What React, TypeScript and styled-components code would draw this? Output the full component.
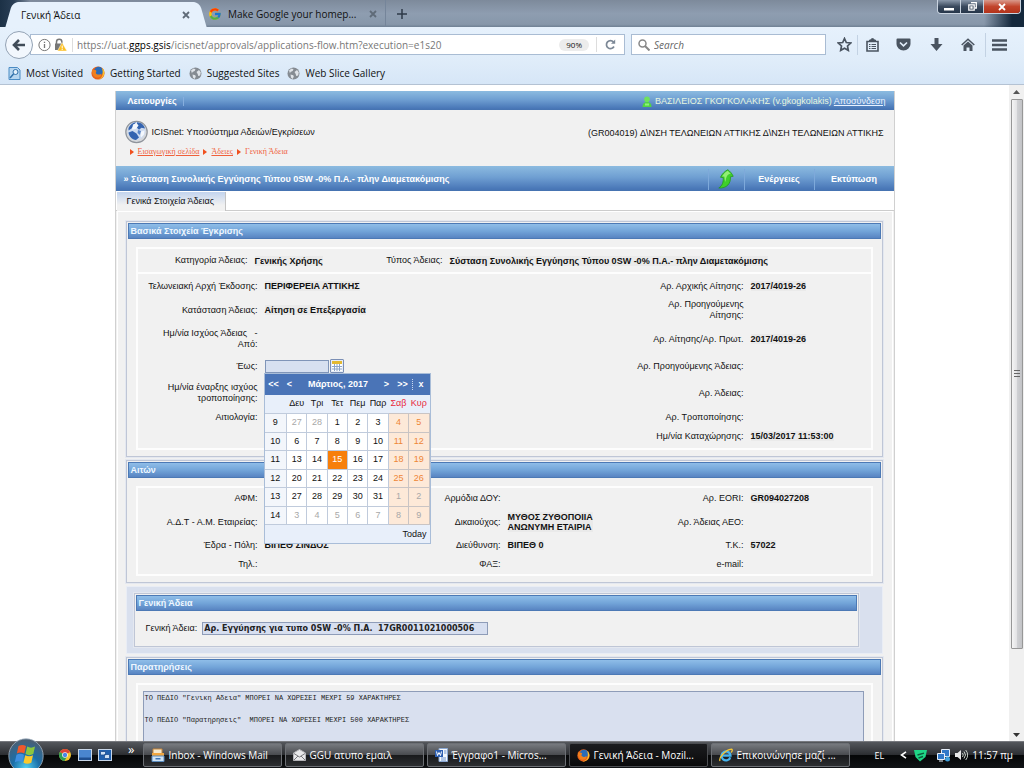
import React from 'react';
import styled, { createGlobalStyle, css } from 'styled-components';
import { FcGoogle } from 'react-icons/fc';

const Global = createGlobalStyle`
  * { box-sizing: border-box; }
  html, body, #root { height: 100%; }
  body { margin: 0; background: #fff; overflow: hidden; }
  button, input, textarea { font: inherit; color: inherit; margin: 0; padding: 0; }
  button { background: none; border: 0; cursor: pointer; }
  svg { display: block; flex: none; }
`;

const uiFont = '"Open Sans", "Noto Sans", sans-serif';
const pageFont = '"Liberation Sans", Arial, sans-serif';

/* ---------- window ---------- */

const Screen = styled.div`
  display: flex;
  flex-direction: column;
  height: 100vh;
  overflow: hidden;
  font-family: ${uiFont};
  font-size: 10px;
  color: #111;
`;

const TabStrip = styled.div`
  display: flex;
  align-items: stretch;
  height: 27px;
  flex: none;
  padding-left: 14px;
  background: linear-gradient(90deg, #1c3146 0, #2a3f56 14px, transparent 30px, transparent calc(100% - 40px), #14283c calc(100% - 12px)),
    linear-gradient(#7d8a9b, #8e9db0 50%, #8797aa 90%, #6f8094);
`;

const Tab = styled.div<{ $active?: boolean }>`
  position: relative;
  display: flex;
  align-items: center;
  ${(p) =>
    p.$active &&
    css`
      width: 184px;
      padding: 0 8px 0 7px;
      margin-top: 2px;
      background: #e6f1fc;
      border-radius: 6px 6px 0 0;
      z-index: 1;
      &::before,
      &::after {
        content: '';
        position: absolute;
        z-index: -1;
        top: 0;
        bottom: 0;
        width: 14px;
        background: #e6f1fc;
      }
      &::before {
        left: -5px;
        border-radius: 6px 0 0 0;
        transform: skewX(-16deg);
      }
      &::after {
        right: -5px;
        border-radius: 0 6px 0 0;
        transform: skewX(16deg);
      }
    `}
  ${(p) =>
    !p.$active &&
    css`
      gap: 6px;
      width: 188px;
      padding: 1px 8px 0 10px;
      border-right: 1px solid #75859a;
    `}
`;

const TabTitle = styled.span`
  flex: 1;
  white-space: nowrap;
`;

const IconButton = styled.button`
  display: grid;
  place-items: center;
  flex: none;
`;

const NewTab = styled(IconButton)`
  width: 32px;
`;

const WindowControls = styled.div`
  display: flex;
  margin-left: auto;
  margin-right: 3px;
  height: 14px;
  border: 1px solid #c9d3df;
  border-top: 0;
  border-radius: 0 0 4px 4px;
  overflow: hidden;
`;

const WindowButton = styled(IconButton)<{ $close?: boolean }>`
  width: ${(p) => (p.$close ? 36 : 23)}px;
  border-right: ${(p) => (p.$close ? 0 : 1)}px solid #c9d3df;
  background: ${(p) =>
    p.$close ? 'linear-gradient(#d99a8c, #c2452c 50%, #b3331b)' : 'linear-gradient(#8b99ab, #3b4a5e 50%, #26364a)'};
`;

const NavBar = styled.div`
  display: flex;
  align-items: center;
  height: 35px;
  flex: none;
  padding: 0 11px 0 5px;
  background: linear-gradient(#e6f1fc, #dfecf9);
`;

const BackButton = styled(IconButton)`
  width: 28px;
  height: 28px;
  border: 1px solid #93a2b4;
  border-radius: 50%;
  background: #f2f7fd;
  z-index: 1;
`;

const UrlBar = styled.div`
  display: flex;
  align-items: center;
  flex: 1;
  height: 21px;
  margin-left: -3px;
  padding-left: 7px;
  background: #fff;
  border: 1px solid #a9bcd3;
`;

const UrlText = styled.span`
  flex: 1;
  margin-left: 5px;
  padding-left: 4px;
  border-left: 1px solid #ddd;
  white-space: nowrap;
  overflow: hidden;
  color: #777;
  b {
    font-weight: 400;
    color: #000;
  }
`;

const ZoomPill = styled.button`
  height: 12px;
  padding: 0 7px;
  border-radius: 6px;
  background: #ececec;
  font-size: 8px;
  line-height: 12px;
`;

const Reload = styled(IconButton)`
  width: 28px;
  height: 15px;
  margin-left: 7px;
  border-left: 1px solid #ddd;
`;

const SearchBox = styled.label`
  display: flex;
  align-items: center;
  gap: 4px;
  width: 195px;
  height: 21px;
  margin-left: 6px;
  padding-left: 6px;
  background: #fff;
  border: 1px solid #a9bcd3;
  input {
    width: 150px;
    border: 0;
    outline: 0;
    font-style: italic;
    background: none;
  }
  input::placeholder {
    color: #666;
    opacity: 1;
  }
`;

const Tools = styled.div`
  display: flex;
  align-items: center;
  margin-left: 10px;
  color: #4a5460;
`;

const Tool = styled(IconButton)<{ $w: number; $sep?: boolean }>`
  width: ${(p) => p.$w}px;
  height: 24px;
  border-left: ${(p) => (p.$sep ? '1px solid #c3d2e3' : '0')};
`;

const Bookmarks = styled.div`
  display: flex;
  align-items: center;
  gap: 8px;
  height: 23px;
  flex: none;
  padding-left: 8px;
  background: linear-gradient(#dfecf9, #d6e6f7);
  border-bottom: 1px solid #b4c2d3;
`;

const Bookmark = styled.a`
  display: flex;
  align-items: center;
  gap: 5px;
  color: #111;
  text-decoration: none;
`;

/* ---------- web page ---------- */

const Viewport = styled.div`
  display: flex;
  flex: 1;
  min-height: 0;
  background: #fff;
`;

const Canvas = styled.div`
  flex: 1;
  min-width: 0;
  overflow: hidden;
  padding: 6px 16px 0;
  font-family: ${pageFont};
  font-size: 9px;
  line-height: 11px;
`;

const Page = styled.div`
  max-width: 780px;
  min-height: 800px;
  margin: 0 auto;
  border: solid #d0d0d0;
  border-width: 0 1px;
  background: #f1f1f1;
`;

const barFill = 'linear-gradient(#8cbbe0, #6f9fd2 45%, #4a78b8 90%, #4572b0)';

const TopBar = styled.header`
  display: flex;
  align-items: center;
  justify-content: space-between;
  height: 19px;
  padding: 1px 8px 0 12px;
  background: ${barFill};
  color: #e6f6e0;
  a {
    color: #e8f1ff;
  }
`;

const MenuTitle = styled.button`
  padding-right: 6px;
  border-right: 1px solid #86aede;
  height: 9px;
  line-height: 9px;
  font-weight: 700;
  color: #fff;
`;

const UserInfo = styled.div`
  display: flex;
  align-items: center;
  gap: 3px;
`;

const Masthead = styled.div`
  display: flex;
  justify-content: space-between;
  height: 56px;
  padding: 9px 10px 0 9px;
`;

const Brand = styled.div`
  display: flex;
  align-items: center;
  gap: 4px;
  height: 26px;
`;

const Office = styled.div`
  line-height: 28px;
`;

const Crumbs = styled.nav`
  display: flex;
  align-items: center;
  gap: 4px;
  padding-left: 5px;
  margin-top: 1px;
  font-family: 'Liberation Serif', serif;
  font-size: 8px;
  color: #f0603a;
  a {
    color: #f0603a;
  }
`;

const TitleBar = styled.div`
  display: flex;
  align-items: center;
  height: 25px;
  padding: 1px 0 0 8px;
  background: ${barFill};
  color: #fff;
  font-weight: 700;
`;

const TitleText = styled.h1`
  flex: 1;
  margin: 0;
  font-size: 9px;
`;

const TitleAction = styled.button<{ $w: number }>`
  display: grid;
  place-items: center;
  width: ${(p) => p.$w}px;
  height: 21px;
  border-left: 1px solid #7ea9da;
`;

const PageTabs = styled.div`
  display: flex;
  height: 20px;
  padding: 1px 1px 0;
  background: #fff;
  border-bottom: 1px solid #ccc;
`;

const PageTab = styled.button`
  height: 19px;
  padding: 0 11px 0 10px;
  border-right: 1px solid #c4c4c4;
  background: linear-gradient(#c3d4ee, #f1f1f1 70%);
`;

const Content = styled.main`
  margin: 0 1px;
  padding: 9px 9px 0 8px;
  border: solid #fff;
  border-width: 1px 1px 0;
`;

const Panel = styled.section`
  margin-bottom: 3px;
  padding: 1px 1px 6px;
  border: 1px solid #bfc6d6;
  background: #f1f1f1;
  box-shadow: 0 0 0 1px #e4e8f0;
`;

const TintedPanel = styled.section`
  margin-bottom: 3px;
  padding: 6px 23px 6px 7px;
  background: #d9e0ee;
  border: 1px solid #e9edf5;
  ${Panel} {
    margin: 0;
  }
`;

const PanelTitle = styled.h2`
  margin: 0;
  height: 16px;
  padding-left: 2px;
  border: 1px solid #4c79b5;
  background: linear-gradient(#8fbde8, #73a5d9 50%, #5884c2);
  color: #eef7ff;
  font-size: 9px;
  line-height: 15px;
`;

const Group = styled.div`
  margin: 8px 8px 0;
  border: 2px solid #fdfdfd;
`;

const row = css`
  display: grid;
  align-items: center;
`;

const KindRow = styled.div`
  ${row}
  grid-template-columns: 110px 7px 108px 80px 7px 1fr;
  height: 25px;
  border-bottom: 2px solid #fdfdfd;
`;

const BasicRow = styled.div<{ $h: number }>`
  ${row}
  grid-template-columns: 120px 7px 1fr 112px 7px 120px;
  height: ${(p) => p.$h}px;
`;

const PartyRow = styled.div<{ $h: number }>`
  ${row}
  grid-template-columns: 120px 7px 1fr 80px 7px 156px 80px 7px 120px;
  height: ${(p) => p.$h}px;
`;

const Label = styled.label`
  text-align: right;
  white-space: pre;
`;

const Value = styled.b`
  justify-self: start;
  background: #eaeaea;
  line-height: 10px;
  white-space: pre;
`;

const Gap = styled.span``;

const DateField = styled.div`
  position: relative;
  display: flex;
  align-items: center;
  gap: 1px;
  width: 80px;
  input {
    width: 64px;
    height: 13px;
    border: 1px solid #8095b8;
    background: #d7e0f0;
  }
`;

const DateButton = styled(IconButton)`
  width: 14px;
  height: 14px;
  border: 1px solid #7b8fb5;
  border-radius: 1px;
  background: #e6ecf6;
`;

const Calendar = styled.div`
  position: absolute;
  z-index: 2;
  top: 14px;
  left: -1px;
  width: 167px;
  border: 1px solid #a9bdd8;
  background: #e8effa;
`;

const CalendarHead = styled.div`
  display: grid;
  grid-template-columns: 18px 14px 1fr 14px 18px 18px;
  align-items: center;
  height: 21px;
  background: #4a74b7;
  color: #fff;
  text-align: center;
  font-weight: 700;
  button:last-child {
    border-left: 1px dotted #c9d8ef;
  }
`;

const Days = styled.table`
  width: 100%;
  table-layout: fixed;
  border-collapse: collapse;
  text-align: center;
  th,
  td {
    padding: 0;
  }
  thead th {
    height: 18px;
    font-weight: 400;
  }
  th:first-child {
    width: 22px;
  }
  tbody tr {
    height: 18px;
  }
  tbody tr:nth-child(odd) {
    height: 19px;
  }
  tbody th {
    background: #f3f6fb;
    font-weight: 400;
    border: 1px solid #c0cbdc;
    border-left: 0;
  }
`;

const Weekday = styled.th<{ $weekend: boolean }>`
  color: ${(p) => (p.$weekend ? '#e8283c' : '#111')};
`;

const Day = styled.td<{ $weekend: boolean; $other: boolean; $today: boolean }>`
  border: 1px solid ${(p) => (p.$weekend ? '#c9c4c4' : '#c0cbdc')};
  background: ${(p) => (p.$today ? '#f77f0a' : p.$weekend ? '#fde9d8' : '#fff')};
  color: ${(p) => (p.$today ? '#fff' : p.$other ? '#a8a8a8' : p.$weekend ? '#ee8636' : '#111')};
`;

const CalendarFoot = styled.div`
  height: 18px;
  padding-right: 3px;
  text-align: right;
  line-height: 18px;
`;

const PermitRow = styled.div`
  display: flex;
  align-items: center;
  gap: 5px;
  height: 23px;
  margin: 6px 0 0 10px;
  input {
    width: 286px;
    height: 13px;
    padding: 0 1px;
    border: 1px solid #8e9cb8;
    background: #d7dff0;
    color: #222;
    font: 700 8px 'DejaVu Sans', sans-serif;
  }
`;

const Notes = styled.textarea`
  display: block;
  width: calc(100% - 12px);
  height: 120px;
  margin: 6px 0 0 5px;
  padding: 1px;
  resize: none;
  overflow: hidden;
  border: 1px solid #8e9cb8;
  background: #d9e0ef;
  color: #222;
  font: 7px/11px 'Liberation Mono', monospace;
`;

const ScrollTrack = styled.div`
  display: flex;
  flex-direction: column;
  align-items: center;
  width: 15px;
  flex: none;
  padding: 5px 0 4px;
  background: #f0f0f0;
`;

const ScrollThumb = styled.div`
  display: grid;
  place-items: center;
  width: 12px;
  height: 85%;
  margin: 5px 0 auto;
  border: 1px solid #979797;
  border-radius: 1px;
  background: linear-gradient(90deg, #f5f5f5, #e4e4e6 45%, #cfd0d3 55%, #c2c3c6);
`;

/* ---------- task bar ---------- */

const TaskBar = styled.footer`
  display: flex;
  align-items: center;
  height: 27px;
  flex: none;
  padding: 0 11px 0 8px;
  border-top: 1px solid #77797e;
  background: linear-gradient(#54575c, #2d2f33 48%, #050607 52%, #111316);
  color: #fff;
`;

const Orb = styled(IconButton)`
  width: 36px;
  height: 27px;
  align-items: end;
  z-index: 1;
  svg {
    margin-top: -4px;
  }
`;

const QuickLaunch = styled.div`
  display: flex;
  align-items: center;
  gap: 6px;
  margin-left: 14px;
`;

const More = styled.button`
  align-self: flex-start;
  margin: 0 9px 0 16px;
  font-size: 13px;
  line-height: 14px;
`;

const Tasks = styled.div`
  display: flex;
  gap: 3px;
  flex: 1;
`;

const Task = styled.button<{ $active?: boolean }>`
  display: flex;
  align-items: center;
  gap: 3px;
  flex: 0 1 139px;
  min-width: 0;
  height: 24px;
  padding-left: 7px;
  border: 1px solid ${(p) => (p.$active ? '#4c4e52' : '#6d7075')};
  border-radius: 2px;
  background: ${(p) =>
    p.$active ? 'linear-gradient(#1b1c1f, #0a0a0b)' : 'linear-gradient(#777a7f, #4a4c50 48%, #191a1c 52%, #2c2e31)'};
  white-space: nowrap;
  overflow: hidden;
`;

const Tray = styled.div`
  display: flex;
  align-items: center;
  gap: 4px;
`;

const Language = styled.span`
  margin-right: 12px;
  font-size: 9px;
`;

/* ---------- icons ---------- */

const Cross = ({ color = '#5f6b78' }: { color?: string }) => (
  <svg width="8" height="8" viewBox="0 0 8 8">
    <path d="M1 1l6 6M7 1L1 7" stroke={color} strokeWidth="1.8" />
  </svg>
);

const FirefoxIcon = ({ size = 14 }: { size?: number }) => (
  <svg width={size} height={size} viewBox="0 0 14 14">
    <circle cx="7" cy="7" r="6.6" fill="#e8611a" />
    <circle cx="7.6" cy="5.2" r="4.4" fill="#2b6cb8" />
    <path d="M1 3.2C2 4 3 3.800 4.200 4c1 .2 1.600 1 1 1.700C4.400 6.500 4.800 8 6.500 8.400c1.700.4 3 .2 3.600-1 .6 2.800-1.400 4.200-3.600 4.200C3.500 11.600.5 9 1 3.200z" fill="#f0801e" />
    <path d="M11 1.800c2.400 2 3 5.500 1.600 8-1.400 2.600-4.200 3.900-6.800 3.600 3.600-.3 5.600-2.600 5.900-5.200.2-2.400-.2-4.400-.7-6.400z" fill="#fbc52d" />
  </svg>
);

const GreyGlobe = () => (
  <svg width="13" height="13" viewBox="0 0 13 13">
    <circle cx="6.500" cy="6.500" r="6" fill="#858b92" />
    <path d="M2 3.500l2.500-2 2 .8-.8 1.800-2.200.8L3 6.500zM7.500 5l2.500-2 1.800 2.200-.6 3.300-2 .5-.5-2zM3.500 7.500l2.800.7.500 1.500L5.500 12 4 10.500z" fill="#dfe3e8" />
  </svg>
);

const BlueGlobe = () => (
  <svg width="23" height="24" viewBox="0 0 23 24">
    <circle cx="11.500" cy="12" r="10.700" fill="#d5d8dc" stroke="#8f949b" strokeWidth="1.200" />
    <circle cx="11.500" cy="11" r="9" fill="#cfdcf0" />
    <path d="M3.500 8C5 4.500 8 2.500 11 2.200L8.500 6 6.500 8.500l-3 2zM12 2.200c4 0 7 2.800 8 6.300l-3.500-.8-2.500 2-2.500-2.500zM3.500 12.500l4-1.500 4 2.500 2.500 4L11 20c-4-.5-7-3.500-7.500-7.500z" fill="#3464b0" />
    <path d="M8 4.500l3.500-1.500 2 2.500L11 9l-4 .5zM15 12l4.500-1.500-.5 4-3 3z" fill="#f4f8fd" />
    <path d="M13 10l3 1-1 4-2.500-2z" fill="#5a86c8" />
  </svg>
);

const Bullet = () => (
  <svg width="4" height="6" viewBox="0 0 4 6">
    <path d="M0 0l4 3-4 3z" fill="#f0501e" />
  </svg>
);

const GreenArrow = () => (
  <svg width="16" height="20" viewBox="0 0 16 20">
    <path d="M.8 19C4.500 16.500 5.500 13 5.200 8.500L2.500 8.300C4 5 6.500 2.500 9.800.7c2.200 1.600 4.400 4 5.400 6.600l-2.800.5c.6 6.500-3.400 11.700-11.600 11.200z" fill="#3fd02b" stroke="#259a1c" strokeWidth=".8" />
    <path d="M4 7.500C5.500 5 7.500 3 9.700 1.800l3 3C9 5 8 8.500 7.500 13 6.500 11 6.800 9 6.300 7.600z" fill="#93ee74" />
  </svg>
);

const UserIcon = () => (
  <svg width="10" height="11" viewBox="0 0 10 11">
    <circle cx="5" cy="3.200" r="2.800" fill="#6fe25c" />
    <path d="M.5 11c0-3.500 1.500-5 4.500-5s4.500 1.500 4.500 5z" fill="#53d543" />
    <path d="M3 7.500h4v2H3z" fill="#8ef07c" />
  </svg>
);

const WindowsFlag = () => (
  <svg width="36" height="31" viewBox="0 0 36 31">
    <defs>
      <radialGradient id="orb" cx=".5" cy=".85" r=".8">
        <stop offset="0" stopColor="#52d0f2" />
        <stop offset=".5" stopColor="#1b6ea8" />
        <stop offset="1" stopColor="#4a5f74" />
      </radialGradient>
    </defs>
    <circle cx="18" cy="18" r="17.200" fill="url(#orb)" stroke="#a5b4c1" strokeWidth=".8" />
    <path d="M10.500 8c2.700-1.400 5-1.400 7.500 0l-1.700 7.500c-2.600-1.300-4.800-1.300-7.500 0z" fill="#f0592b" />
    <path d="M19.200 8.600c2.600 1.400 5 1.400 7.800 0l-1.700 7.500c-2.800 1.400-5.200 1.400-7.800 0z" fill="#8cc63f" />
    <path d="M8.500 16.700c2.700-1.300 5-1.300 7.500 0l-1.700 7.500c-2.600-1.300-4.800-1.300-7.500 0z" fill="#3f8fe0" />
    <path d="M17.200 17.300c2.600 1.400 5 1.400 7.800 0l-1.700 7.500c-2.800 1.400-5.200 1.400-7.800 0z" fill="#fcc92c" />
  </svg>
);

const ChromeIcon = () => (
  <svg width="14" height="14" viewBox="0 0 14 14">
    <circle cx="7" cy="7" r="6" fill="#f2c22e" />
    <path d="M7 7L1.800 4A6 6 0 0 1 12.200 4z" fill="#dc4437" />
    <path d="M7 7L1.800 4A6 6 0 0 0 6.500 13L9 8.500z" fill="#2f9e54" />
    <circle cx="7" cy="7" r="2.800" fill="#fff" />
    <circle cx="7" cy="7" r="2.200" fill="#4a86e8" />
  </svg>
);

const DesktopIcon = ({ windows }: { windows?: boolean }) => (
  <svg width="14" height="12" viewBox="0 0 14 12">
    <rect x=".5" y=".5" width="13" height="11" fill={windows ? '#1f5fae' : '#4a86cf'} stroke="#c8d6e8" />
    {windows ? (
      <path d="M2.500 2.500h5v3.500h-5zM6.500 5.500h5v4h-5z" fill="#cfe0f4" stroke="#1b4d90" strokeWidth=".8" />
    ) : (
      <path d="M1 8.500h12V11H1z" fill="#1f4f90" />
    )}
  </svg>
);

const MailStack = () => (
  <svg width="14" height="14" viewBox="0 0 14 14">
    <path d="M2 1h9v9H2z" fill="#f4e9cf" stroke="#c9873b" />
    <path d="M1 5h12v3H1z" fill="#f0a640" />
    <path d="M1 8h12v5.500H1z" fill="#cfe3f5" stroke="#5a8cc0" />
    <path d="M4.500 10h5v1.500h-5z" fill="#3c74b4" />
  </svg>
);

const Envelope = () => (
  <svg width="13" height="12" viewBox="0 0 13 12">
    <path d="M.5 4L6.500.5l6 3.500v7.500H.5z" fill="#e8e8ea" stroke="#b4b4b8" />
    <path d="M1 4.500l5.500 3.500L12 4.500M1 11l4-4M12 11L8 7" fill="none" stroke="#77777c" />
  </svg>
);

const WordIcon = () => (
  <svg width="13" height="14" viewBox="0 0 13 14">
    <path d="M4 .5h8.500v13H4z" fill="#f4f8fd" stroke="#8aa8d4" />
    <path d="M6 10h5M6 12h5M9 3h2.500M9 5h2.500" stroke="#6d92cc" />
    <path d="M0 2h8v7H0z" fill="#2d5fb2" />
    <path d="M1.500 3.500l1 4L4 4.500l1.500 3 1-4" fill="none" stroke="#fff" />
  </svg>
);

const IeIcon = () => (
  <svg width="14" height="14" viewBox="0 0 14 14">
    <path d="M11.300 9.300A4.500 4.500 0 1 1 11.500 7.600H3.500" fill="none" stroke="#45b4ee" strokeWidth="2.300" />
    <path d="M1 13C-.5 10 6 2 12.500 1.200c1.500.3.500 2.300-.3 3.300" fill="none" stroke="#f4c736" strokeWidth="1.300" />
  </svg>
);

/* ---------- data ---------- */

const weekdays = ['Δευ', 'Τρι', 'Τετ', 'Πεμ', 'Παρ', 'Σαβ', 'Κυρ'];
const weeks: { n: number; days: number[] }[] = [
  { n: 9, days: [27, 28, 1, 2, 3, 4, 5] },
  { n: 10, days: [6, 7, 8, 9, 10, 11, 12] },
  { n: 11, days: [13, 14, 15, 16, 17, 18, 19] },
  { n: 12, days: [20, 21, 22, 23, 24, 25, 26] },
  { n: 13, days: [27, 28, 29, 30, 31, 1, 2] },
  { n: 14, days: [3, 4, 5, 6, 7, 8, 9] },
];

const isOtherMonth = (week: number, day: number) => (week === 9 && day > 20) || (week > 12 && day < 10);

const DatePicker = () => (
  <Calendar>
    <CalendarHead>
      <button>&lt;&lt;</button>
      <button>&lt;</button>
      <span>Μάρτιος, 2017</span>
      <button>&gt;</button>
      <button>&gt;&gt;</button>
      <button>x</button>
    </CalendarHead>
    <Days>
      <thead>
        <tr>
          <th />
          {weekdays.map((d, i) => (
            <Weekday key={d} $weekend={i > 4}>
              {d}
            </Weekday>
          ))}
        </tr>
      </thead>
      <tbody>
        {weeks.map((w) => (
          <tr key={w.n}>
            <th>{w.n}</th>
            {w.days.map((d, i) => (
              <Day key={i} $weekend={i > 4} $other={isOtherMonth(w.n, d)} $today={w.n === 11 && d === 15}>
                {d}
              </Day>
            ))}
          </tr>
        ))}
      </tbody>
    </Days>
    <CalendarFoot>Today</CalendarFoot>
  </Calendar>
);

const Field = ({ label, value }: { label?: string; value?: string }) => (
  <>
    <Label as="span">{label}</Label>
    <Gap />
    {value ? <Value>{value}</Value> : <Gap />}
  </>
);

const permitType = 'Σύσταση Συνολικής Εγγύησης Τύπου 0SW -0% Π.Α.- πλην Διαμετακόμισης';
const notes =
  'ΤΟ ΠΕΔΙΟ "Γενικη Αδεια" ΜΠΟΡΕΙ ΝΑ ΧΩΡΕΣΕΙ ΜΕΧΡΙ 59 ΧΑΡΑΚΤΗΡΕΣ\n\nΤΟ ΠΕΔΙΟ "Παρατηρησεις"  ΜΠΟΡΕΙ ΝΑ ΧΩΡΕΣΕΙ ΜΕΧΡΙ 500 ΧΑΡΑΚΤΗΡΕΣ';

const Browser = () => (
  <>
    <TabStrip>
      <Tab $active>
        <TabTitle>Γενική Άδεια</TabTitle>
        <IconButton aria-label="Close tab">
          <Cross />
        </IconButton>
      </Tab>
      <Tab>
        <FcGoogle size={14} />
        <TabTitle>Make Google your homep...</TabTitle>
        <IconButton aria-label="Close tab">
          <Cross />
        </IconButton>
      </Tab>
      <NewTab aria-label="New tab">
        <svg width="10" height="10" viewBox="0 0 10 10">
          <path d="M5 0v10M0 5h10" stroke="#2e3a48" strokeWidth="1.500" />
        </svg>
      </NewTab>
      <WindowControls>
        <WindowButton aria-label="Minimize">
          <svg width="10" height="8" viewBox="0 0 10 8">
            <path d="M0 5h10v2.500H0z" fill="#fff" />
          </svg>
        </WindowButton>
        <WindowButton aria-label="Restore">
          <svg width="9" height="9" viewBox="0 0 9 9">
            <path d="M3 .700h5.300v5.300H7M.800 2.800h5.400v5.400H.800zM3 5h1v1H3z" fill="none" stroke="#fff" strokeWidth="1.300" />
          </svg>
        </WindowButton>
        <WindowButton $close aria-label="Close">
          <Cross color="#fff" />
        </WindowButton>
      </WindowControls>
    </TabStrip>
    <NavBar>
      <BackButton aria-label="Back">
        <svg width="14" height="12" viewBox="0 0 14 12">
          <path d="M13 6H3M7 1L2 6l5 5" fill="none" stroke="#414c58" strokeWidth="2.600" />
        </svg>
      </BackButton>
      <UrlBar>
        <svg width="29" height="14" viewBox="0 0 29 14">
          <circle cx="6.500" cy="7" r="5.600" fill="none" stroke="#777" />
          <path d="M6.500 6v4M6.500 3.800v1.300" stroke="#777" strokeWidth="1.300" />
          <path d="M18.500 6V4a2.700 2.700 0 0 1 5.400 0v2" fill="none" stroke="#777" strokeWidth="1.500" />
          <path d="M17 5.500h8V12h-8z" fill="#777" />
          <path d="M24 4.500l5 8.500H19.500z" fill="#fbbf23" stroke="#fff" strokeWidth=".5" />
          <path d="M24.200 7.500v3M24.200 11v1" stroke="#fff" />
        </svg>
        <UrlText>
          https://uat.<b>ggps.gsis</b>/icisnet/approvals/applications-flow.htm?execution=e1s20
        </UrlText>
        <ZoomPill>90%</ZoomPill>
        <Reload aria-label="Reload">
          <svg width="11" height="11" viewBox="0 0 11 11">
            <path d="M9 7.500A4 4 0 1 1 8.500 3" fill="none" stroke="#7c8896" strokeWidth="1.700" />
            <path d="M10.200.5v4.300H6z" fill="#7c8896" />
          </svg>
        </Reload>
      </UrlBar>
      <SearchBox>
        <svg width="12" height="12" viewBox="0 0 12 12">
          <circle cx="4.500" cy="4.500" r="3.500" fill="none" stroke="#888" strokeWidth="1.500" />
          <path d="M7 7l4.500 4.500" stroke="#888" strokeWidth="2" />
        </svg>
        <input aria-label="Search" placeholder="Search" />
      </SearchBox>
      <Tools>
        <Tool $w={16} aria-label="Bookmark this page">
          <svg width="15" height="15" viewBox="0 0 15 15">
            <path d="M7.500 1.500l1.800 4 4.400.5-3.200 3 .8 4.300-3.800-2.100-3.800 2.100.8-4.300-3.200-3 4.400-.5z" fill="none" stroke="currentColor" strokeWidth="1.700" />
          </svg>
        </Tool>
        <svg width="6" height="20" viewBox="0 0 6 20">
          <path d="M5.500 0v20" stroke="#c3d2e3" />
        </svg>
        <Tool $w={28} aria-label="Bookmarks">
          <svg width="13" height="14" viewBox="0 0 13 14">
            <path d="M1 3.500h11v9.500H1z" fill="none" stroke="currentColor" strokeWidth="1.600" />
            <path d="M3.500 3V2H5a1.500 1.500 0 0 1 3 0h1.500v1z" fill="currentColor" stroke="currentColor" />
            <path d="M3 6.500h1.500M5.500 6.500H10M3 8.500h1.500M5.500 8.500H10M3 10.500h1.500M5.500 10.500H10" stroke="currentColor" />
          </svg>
        </Tool>
        <Tool $w={35} aria-label="Pocket">
          <svg width="15" height="13" viewBox="0 0 15 13">
            <path d="M.5 1.500Q.5.500 1.500.5h12q1 0 1 1V6a7 6.500 0 0 1-14 0z" fill="currentColor" />
            <path d="M4 4.500l3.500 3.300L11 4.500" fill="none" stroke="#e3eefa" strokeWidth="1.700" />
          </svg>
        </Tool>
        <Tool $w={30} aria-label="Downloads">
          <svg width="13" height="13" viewBox="0 0 13 13">
            <path d="M4.500 0h4v6H12.500l-6 7-6-7h4z" fill="currentColor" />
          </svg>
        </Tool>
        <Tool $w={34} aria-label="Home">
          <svg width="14" height="13" viewBox="0 0 14 13">
            <path d="M.7 7L7 1.200 13.300 7" fill="none" stroke="currentColor" strokeWidth="1.500" />
            <path d="M2.500 7.500L7 3.500l4.500 4V13h-3V9.500h-3V13h-3z" fill="currentColor" />
          </svg>
        </Tool>
        <Tool $w={28} $sep aria-label="Menu">
          <svg width="15" height="12" viewBox="0 0 15 12">
            <path d="M0 1.500h15M0 6h15M0 10.500h15" stroke="currentColor" strokeWidth="2.400" />
          </svg>
        </Tool>
      </Tools>
    </NavBar>
    <Bookmarks>
      <Bookmark href="#">
        <svg width="13" height="13" viewBox="0 0 13 13">
          <path d="M1 .500h8.500L12 3v9.500H1z" fill="#b7d6f0" stroke="#4b8cc4" />
          <circle cx="7.500" cy="5" r="2.500" fill="#e4f1fb" stroke="#2f6fa8" />
          <path d="M5.500 7L2 11" stroke="#2f6fa8" strokeWidth="1.500" />
        </svg>
        Most Visited
      </Bookmark>
      <Bookmark href="#">
        <FirefoxIcon />
        Getting Started
      </Bookmark>
      <Bookmark href="#">
        <GreyGlobe />
        Suggested Sites
      </Bookmark>
      <Bookmark href="#">
        <GreyGlobe />
        Web Slice Gallery
      </Bookmark>
    </Bookmarks>
  </>
);

const PermitPage = () => (
  <Page>
    <TopBar>
      <MenuTitle>Λειτουργίες</MenuTitle>
      <UserInfo>
        <UserIcon />
        <span>
          ΒΑΣΙΛΕΙΟΣ ΓΚΟΓΚΟΛΑΚΗΣ (v.gkogkolakis) <a href="#">Αποσύνδεση</a>
        </span>
      </UserInfo>
    </TopBar>
    <Masthead>
      <div>
        <Brand>
          <BlueGlobe />
          ICISnet: Υποσύστημα Αδειών/Εγκρίσεων
        </Brand>
        <Crumbs>
          <Bullet />
          <a href="#">Εισαγωγική σελίδα</a>
          <Bullet />
          <a href="#">Άδειες</a>
          <Bullet />
          <span>Γενική Άδεια</span>
        </Crumbs>
      </div>
      <Office>(GR004019) Δ\ΝΣΗ ΤΕΛΩΝΕΙΩΝ ΑΤΤΙΚΗΣ Δ\ΝΣΗ ΤΕΛΩΝΕΙΩΝ ΑΤΤΙΚΗΣ</Office>
    </Masthead>
    <TitleBar>
      <TitleText>»{` ${permitType}`}</TitleText>
      <TitleAction $w={36} aria-label="Up">
        <GreenArrow />
      </TitleAction>
      <TitleAction $w={70}>Ενέργειες</TitleAction>
      <TitleAction $w={80}>Εκτύπωση</TitleAction>
    </TitleBar>
    <PageTabs>
      <PageTab>Γενικά Στοιχεία Άδειας</PageTab>
    </PageTabs>
    <Content>
      <Panel>
        <PanelTitle>Βασικά Στοιχεία Έγκρισης</PanelTitle>
        <Group>
          <KindRow>
            <Field label="Κατηγορία Άδειας:" value="Γενικής Χρήσης" />
            <Field label="Τύπος Άδειας:" value={permitType} />
          </KindRow>
          <BasicRow $h={24}>
            <Field label="Τελωνειακή Αρχή Έκδοσης:" value="ΠΕΡΙΦΕΡΕΙΑ ΑΤΤΙΚΗΣ" />
            <Field label="Αρ. Αρχικής Αίτησης:" value="2017/4019-26" />
          </BasicRow>
          <BasicRow $h={24}>
            <Field label="Κατάσταση Άδειας:" value="Αίτηση σε Επεξεργασία" />
            <Field label={'Αρ. Προηγούμενης\nΑίτησης:'} />
          </BasicRow>
          <BasicRow $h={34}>
            <Field label={'Ημ/νία Ισχύος Άδειας   -\nΑπό:'} />
            <Field label="Αρ. Αίτησης/Αρ. Πρωτ." value="2017/4019-26" />
          </BasicRow>
          <BasicRow $h={20}>
            <Label htmlFor="until">Έως:</Label>
            <Gap />
            <DateField>
              <input id="until" />
              <DateButton aria-label="Calendar">
                <svg width="10" height="10" viewBox="0 0 10 10">
                  <path d="M0 0h10v10H0z" fill="#fff" />
                  <path d="M0 0h10v3H0z" fill="#e3b932" />
                  <path d="M2.500 3v7M5 3v7M7.500 3v7M0 5.500h10M0 8h10" stroke="#8ca4c8" />
                </svg>
              </DateButton>
              <DatePicker />
            </DateField>
            <Field label="Αρ. Προηγούμενης Άδειας:" />
          </BasicRow>
          <BasicRow $h={34}>
            <Field label={'Ημ/νία έναρξης ισχύος\nτροποποίησης:'} />
            <Field label="Αρ. Άδειας:" />
          </BasicRow>
          <BasicRow $h={14}>
            <Field label="Αιτιολογία:" />
            <Field label="Αρ. Τροποποίησης:" />
          </BasicRow>
          <BasicRow $h={24}>
            <Field />
            <Field label="Ημ/νία Καταχώρησης:" value="15/03/2017 11:53:00" />
          </BasicRow>
        </Group>
      </Panel>
      <Panel>
        <PanelTitle>Αιτών</PanelTitle>
        <Group>
          <PartyRow $h={20}>
            <Field label="ΑΦΜ:" />
            <Field label="Αρμόδια ΔΟΥ:" />
            <Field label="Αρ. EORI:" value="GR094027208" />
          </PartyRow>
          <PartyRow $h={28}>
            <Field label="Α.Δ.Τ - Α.Μ. Εταιρείας:" />
            <Field label="Δικαιούχος:" value={'ΜΥΘΟΣ ΖΥΘΟΠΟΙΙΑ\nΑΝΩΝΥΜΗ ΕΤΑΙΡΙΑ'} />
            <Field label="Αρ. Άδειας ΑΕΟ:" />
          </PartyRow>
          <PartyRow $h={18}>
            <Field label="Έδρα - Πόλη:" value="ΒΙΠΕΘ ΣΙΝΔΟΣ" />
            <Field label="Διεύθυνση:" value="ΒΙΠΕΘ 0" />
            <Field label="Τ.Κ.:" value="57022" />
          </PartyRow>
          <PartyRow $h={20}>
            <Field label="Τηλ.:" />
            <Field label="ΦΑΞ:" />
            <Field label="e-mail:" />
          </PartyRow>
        </Group>
      </Panel>
      <TintedPanel>
        <Panel>
          <PanelTitle>Γενική Άδεια</PanelTitle>
          <PermitRow>
            <Label htmlFor="permit">Γενική Άδεια:</Label>
            <input id="permit" defaultValue="Αρ. Εγγύησης για τυπο 0SW -0% Π.Α.  17GR0011021000506" />
          </PermitRow>
        </Panel>
      </TintedPanel>
      <Panel>
        <PanelTitle>Παρατηρήσεις</PanelTitle>
        <Group>
          <Notes aria-label="Παρατηρήσεις" defaultValue={notes} />
        </Group>
      </Panel>
    </Content>
  </Page>
);

const WindowsTaskBar = () => (
  <TaskBar>
    <Orb aria-label="Start">
      <WindowsFlag />
    </Orb>
    <QuickLaunch>
      <IconButton aria-label="Chrome">
        <ChromeIcon />
      </IconButton>
      <IconButton aria-label="Show desktop">
        <DesktopIcon />
      </IconButton>
      <IconButton aria-label="Switch windows">
        <DesktopIcon windows />
      </IconButton>
    </QuickLaunch>
    <More>»</More>
    <Tasks>
      <Task>
        <MailStack />
        Inbox - Windows Mail
      </Task>
      <Task>
        <Envelope />
        GGU ατυπο εμαιλ
      </Task>
      <Task>
        <WordIcon />
        Έγγραφο1 - Micros...
      </Task>
      <Task $active>
        <FirefoxIcon size={13} />
        Γενική Άδεια - Mozil...
      </Task>
      <Task>
        <IeIcon />
        Επικοινώνησε μαζί ...
      </Task>
    </Tasks>
    <Tray>
      <Language>EL</Language>
      <svg width="7" height="8" viewBox="0 0 7 8">
        <path d="M6 .8L1.500 4 6 7.200" fill="none" stroke="#fff" strokeWidth="1.600" />
      </svg>
      <svg width="22" height="13" viewBox="0 0 22 13">
        <path d="M3 1h13l-1.500 7L9 12.500 4.500 8z" fill="#1fd687" />
        <path d="M6.500 6l6.500-1.800M7.500 9l4.500-1.500" stroke="#0b5c3a" strokeWidth="1.400" />
      </svg>
      <svg width="14" height="13" viewBox="0 0 14 13">
        <path d="M4.500.5h8v7h-8z" fill="#2f78c8" stroke="#e6eef8" />
        <path d="M.5 4.500h7v6h-7z" fill="#2f78c8" stroke="#e6eef8" />
        <path d="M2 12h4" stroke="#e6eef8" />
        <circle cx="10.500" cy="10" r="2.500" fill="#3fa0dc" />
      </svg>
      <svg width="13" height="12" viewBox="0 0 13 12">
        <path d="M0 4h2.500L6 1v10L2.500 8H0z" fill="#e8e8e8" />
        <path d="M7.500 4q1.500 2 0 4M9 2.500q3 3.500 0 7M10.700 1q4 5 0 10" fill="none" stroke="#c8d0c8" />
      </svg>
      <span>11:57 πμ</span>
    </Tray>
  </TaskBar>
);

export default function App() {
  return (
    <Screen>
      <Global />
      <Browser />
      <Viewport>
        <Canvas>
          <PermitPage />
        </Canvas>
        <ScrollTrack>
          <svg width="7" height="4" viewBox="0 0 7 4">
            <path d="M0 4l3.500-4L7 4z" fill="#555" />
          </svg>
          <ScrollThumb>
            <svg width="6" height="7" viewBox="0 0 6 7">
              <path d="M0 .5h6M0 3.500h6M0 6.500h6" stroke="#666" />
            </svg>
          </ScrollThumb>
          <svg width="7" height="4" viewBox="0 0 7 4">
            <path d="M0 0l3.500 4L7 0z" fill="#333" />
          </svg>
        </ScrollTrack>
      </Viewport>
      <WindowsTaskBar />
    </Screen>
  );
}
